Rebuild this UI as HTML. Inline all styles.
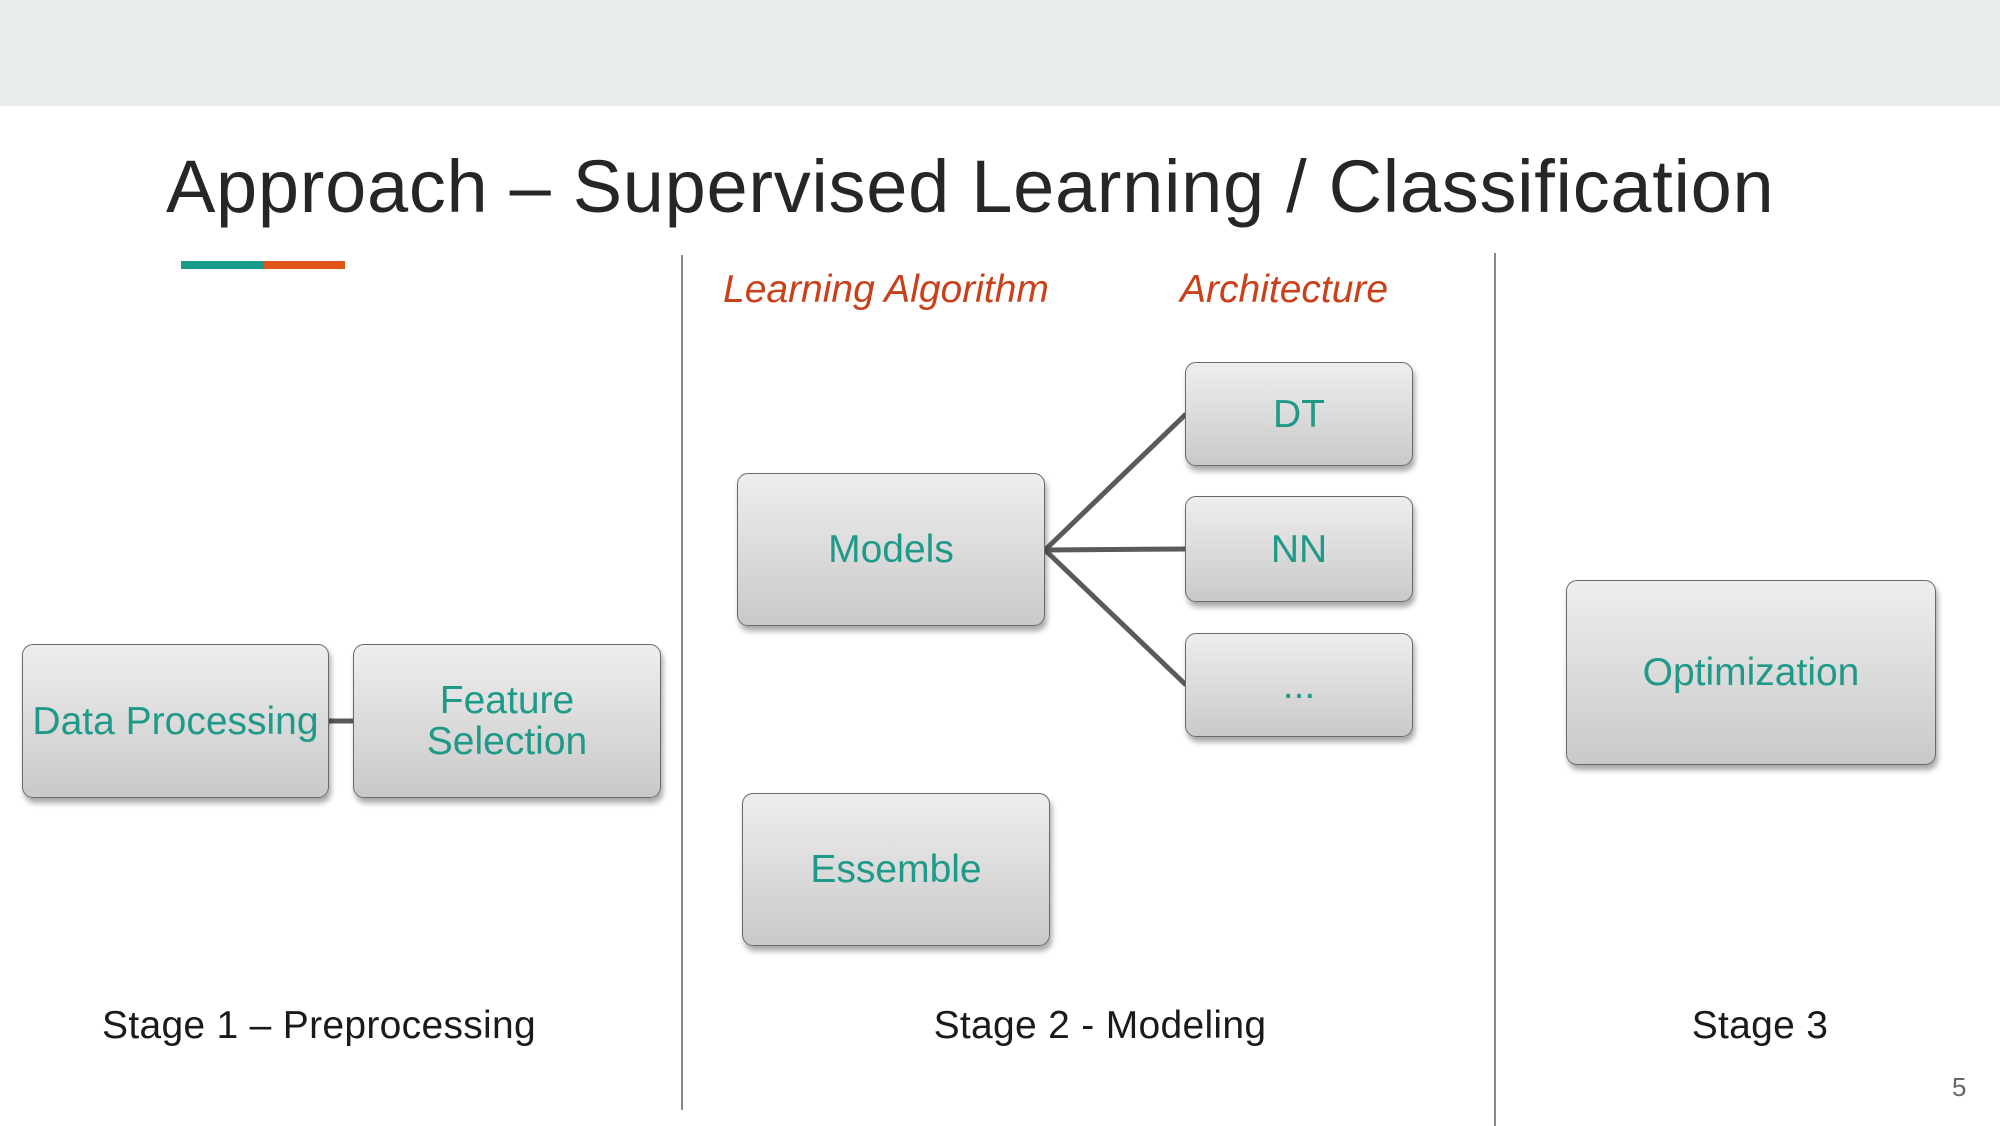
<!DOCTYPE html>
<html><head><meta charset="utf-8"><style>
body{margin:0;width:2000px;height:1126px;background:#fff;position:relative;overflow:hidden;font-family:"Liberation Sans",sans-serif}
.band{position:absolute;left:0;top:0;width:2000px;height:106px;background:#e8ecec}
.title{position:absolute;left:166px;top:144px;font-size:74px;color:#262626;white-space:nowrap;letter-spacing:0.7px}
.bar{position:absolute;top:261px;height:8px}
.vl{position:absolute;width:2px;background:#888}
.it{position:absolute;font-style:italic;color:#c9401a;font-size:39px;white-space:nowrap}
.box{position:absolute;box-sizing:border-box;border:1.5px solid #6a6a6a;border-radius:11px;background:linear-gradient(#eeeeee,#c9c9c9);box-shadow:2px 5px 6px rgba(0,0,0,0.35);display:flex;align-items:center;justify-content:center;text-align:center;color:#1f9a88;font-size:39px;line-height:41px}
.st{position:absolute;font-size:39px;color:#1a1a1a;white-space:nowrap;transform:translateX(-50%);letter-spacing:0.3px}
</style></head><body>
<div class="band"></div>
<div class="title">Approach – Supervised Learning / Classification</div>
<div class="bar" style="left:181px;width:83px;background:#1a9a8a"></div>
<div class="bar" style="left:264px;width:81px;background:#e0561a"></div>
<div class="vl" style="left:681px;top:255px;height:855px"></div>
<div class="vl" style="left:1494px;top:253px;height:873px"></div>
<div class="it" style="left:723px;top:268px">Learning Algorithm</div>
<div class="it" style="left:1180px;top:268px">Architecture</div>
<svg style="position:absolute;left:0;top:0" width="2000" height="1126">
<g stroke="#5a5a5a" stroke-width="5" fill="none">
<line x1="327" y1="721" x2="355" y2="721"/>
<line x1="1045" y1="550" x2="1186" y2="414"/>
<line x1="1045" y1="550" x2="1186" y2="549"/>
<line x1="1045" y1="550" x2="1186" y2="685"/>
</g></svg>
<div class="box" style="left:22px;top:644px;width:307px;height:154px">Data Processing</div>
<div class="box" style="left:353px;top:644px;width:308px;height:154px">Feature<br>Selection</div>
<div class="box" style="left:737px;top:473px;width:308px;height:153px">Models</div>
<div class="box" style="left:1185px;top:362px;width:228px;height:104px">DT</div>
<div class="box" style="left:1185px;top:496px;width:228px;height:106px">NN</div>
<div class="box" style="left:1185px;top:633px;width:228px;height:104px">...</div>
<div class="box" style="left:742px;top:793px;width:308px;height:153px">Essemble</div>
<div class="box" style="left:1566px;top:580px;width:370px;height:185px">Optimization</div>
<div class="st" style="left:319px;top:1004px">Stage 1 – Preprocessing</div>
<div class="st" style="left:1100px;top:1004px">Stage 2 - Modeling</div>
<div class="st" style="left:1760px;top:1004px">Stage 3</div>
<div style="position:absolute;left:1952px;top:1072px;font-size:26px;color:#666">5</div>
</body></html>
